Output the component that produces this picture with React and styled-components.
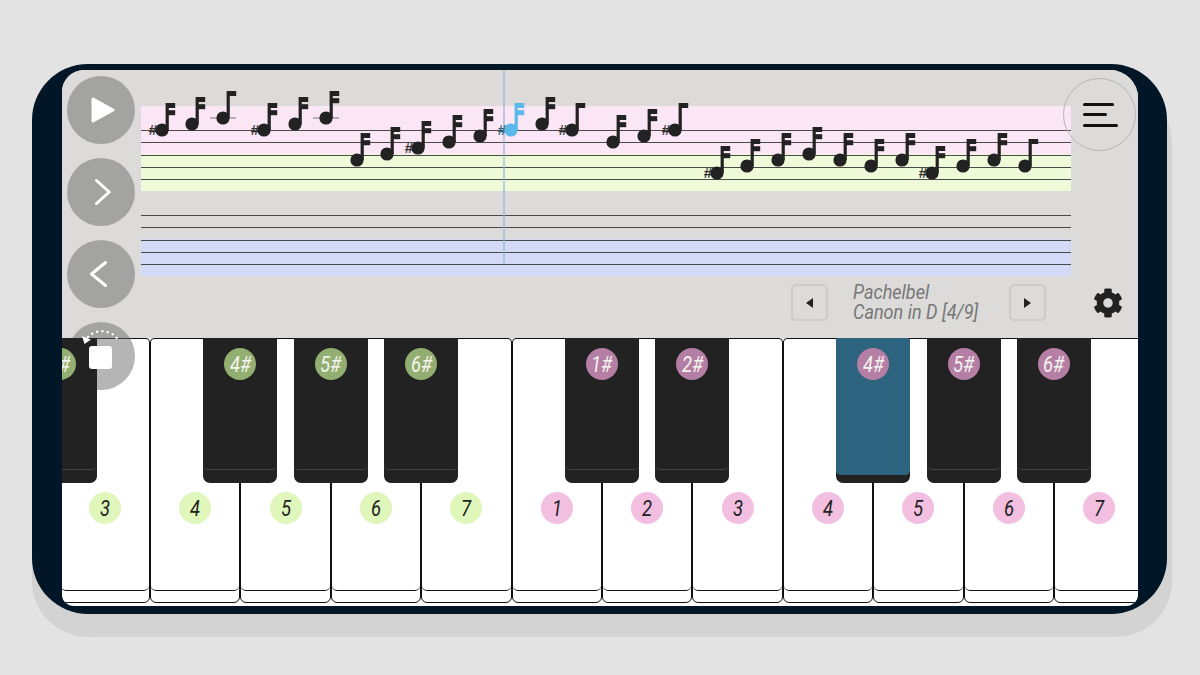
import styled, { createGlobalStyle } from "styled-components";
import { FaCog } from "react-icons/fa";

const GlobalStyle = createGlobalStyle`
  html, body {
    margin: 0;
    height: 100%;
    background: #e3e3e3;
    overflow: hidden;
  }
`;

// cx, cy of the note head, flags, sharp
const notes = [
  [162, 130, 2, 1], [192, 124, 2, 0], [223, 118, 1, 0], [264, 130, 2, 1], [295, 124, 2, 0],
  [326, 118, 2, 0], [357, 160, 2, 0], [387, 154, 2, 0], [418, 148, 2, 1], [449, 142, 2, 0],
  [480, 136, 2, 0], [511, 130, 2, 1], [542, 124, 2, 0], [572, 130, 1, 1], [613, 142, 2, 0],
  [644, 136, 2, 0], [675, 130, 1, 1], [717, 173, 2, 1], [747, 166, 2, 0], [778, 160, 2, 0],
  [809, 154, 2, 0], [840, 160, 2, 0], [871, 166, 2, 0], [902, 160, 2, 0], [932, 173, 2, 1],
  [963, 166, 2, 0], [994, 160, 2, 0], [1025, 166, 1, 0],
];

// first key is off screen, only its black key shows at the left edge
const keys = [
  { tone: "green", black: "2#" },
  { n: "3", tone: "green" },
  { n: "4", tone: "green", black: "4#" },
  { n: "5", tone: "green", black: "5#" },
  { n: "6", tone: "green", black: "6#" },
  { n: "7", tone: "green" },
  { n: "1", tone: "pink", black: "1#" },
  { n: "2", tone: "pink", black: "2#" },
  { n: "3", tone: "pink" },
  { n: "4", tone: "pink", black: "4#", active: true },
  { n: "5", tone: "pink", black: "5#" },
  { n: "6", tone: "pink", black: "6#" },
  { n: "7", tone: "pink" },
];

const Note = ({ cx, cy, flags, sharp, active }) => {
  const color = active ? "#5bb8e8" : "#222";
  const top = cy - 27;
  return (
    <g fill={color}>
      {cy === 118 && <line x1={cx - 13} x2={cx + 13} y1={cy} y2={cy} stroke="#777" strokeWidth="1" />}
      {sharp ? (
        <SharpText x={cx - 9} y={cy + 5} fill={active ? "#2d6885" : "#333"}>
          #
        </SharpText>
      ) : null}
      <circle cx={cx} cy={cy} r="6.6" />
      <rect x={cx + 3.6} y={top} width="3.2" height="27" />
      <rect x={cx + 5} y={top} width="8.2" height="5" />
      {flags === 2 && <rect x={cx + 5} y={top + 7.2} width="8.2" height="5" />}
    </g>
  );
};

const Staff = () => (
  <StaffLines>
    <StaffLine />
    <StaffLine />
    <StaffLine />
    <StaffLine />
    <StaffLine />
  </StaffLines>
);

const App = () => {
  return (
    <Page>
      <GlobalStyle />
      <Phone>
        <Screen>
          <TopPanel>
            <Score>
              <StaffBlock>
                <Band $color="#fae6f5" $height={48} />
                <Band $color="#effad9" $height={37} />
                <Staff />
              </StaffBlock>
              <StaffBlock>
                <Band $color="transparent" $height={48} />
                <Band $color="#d3daf7" $height={37} />
                <Staff />
              </StaffBlock>
              <NotesLayer viewBox="141 106 930 170" width="930" height="170">
                <line x1="504" x2="504" y1="70" y2="263" stroke="#8fb6cf" strokeWidth="1.2" />
                {notes.map(([cx, cy, flags, sharp], i) => (
                  <Note key={i} cx={cx} cy={cy} flags={flags} sharp={sharp} active={cx === 511} />
                ))}
              </NotesLayer>
            </Score>
            <SongRow>
              <SongButton>
                <svg width="9" height="12" viewBox="0 0 9 12">
                  <path d="M8 1v10L1 6z" fill="#222" />
                </svg>
              </SongButton>
              <SongTitle>
                <SongText>
                  Pachelbel
                  <br />
                  Canon in D [4/9]
                </SongText>
              </SongTitle>
              <SongButton>
                <svg width="9" height="12" viewBox="0 0 9 12">
                  <path d="M1 1v10l7-5z" fill="#222" />
                </svg>
              </SongButton>
              <Gear>
                <FaCog size={30} />
              </Gear>
            </SongRow>
          </TopPanel>

          <Keyboard>
            {keys.map((k, i) => (
              <WhiteKey key={i}>
                <WhiteFace>
                  {k.n && (
                    <Badge $tone={k.tone}>
                      <BadgeLabel>{k.n}</BadgeLabel>
                    </Badge>
                  )}
                </WhiteFace>
                {k.black && (
                  <BlackKey>
                    <BlackFace $active={k.active}>
                      <Badge $tone={k.tone} $dark>
                        <BadgeLabel>{k.black}</BadgeLabel>
                      </Badge>
                    </BlackFace>
                  </BlackKey>
                )}
              </WhiteKey>
            ))}
          </Keyboard>

          <SideButtons>
            <RoundButton>
              <svg width="28" height="30" viewBox="0 0 28 30">
                <path d="M6 4 26 15 6 26z" fill="#fff" stroke="#fff" strokeWidth="3" strokeLinejoin="round" />
              </svg>
            </RoundButton>
            <RoundButton>
              <svg width="20" height="30" viewBox="0 0 20 30">
                <path d="M5.5 3.5L18.2 15 5.5 26.5" fill="none" stroke="#fff" strokeWidth="3" strokeLinecap="round" strokeLinejoin="round" />
              </svg>
            </RoundButton>
            <RoundButton $shift={3}>
              <svg width="20" height="30" viewBox="0 0 20 30">
                <path d="M17.5 3.5L3.5 15l14 11.5" fill="none" stroke="#fff" strokeWidth="3" strokeLinecap="round" strokeLinejoin="round" />
              </svg>
            </RoundButton>
            <RoundButton>
              <svg width="68" height="68" viewBox="0 0 68 68">
                <path
                  d="M21 15C26 10 33 8 40 10C45 11 49 14 51 18"
                  fill="none"
                  stroke="#fff"
                  strokeWidth="2.4"
                  strokeLinecap="round"
                  strokeDasharray="0.1 5.2"
                />
                <path d="M15 14l9 3.5-6.5 4.5z" fill="#fff" />
                <rect x="22" y="24" width="23" height="23" rx="3" fill="#fff" />
              </svg>
            </RoundButton>
          </SideButtons>

          <MenuButton>
            <MenuBar $width={31} />
            <MenuBar $width={24} />
            <MenuBar $width={35} />
          </MenuButton>
        </Screen>
      </Phone>
    </Page>
  );
};

const Page = styled.div`
  padding: 64px 0 0 32px;
`;

const Phone = styled.div`
  width: 1135px;
  height: 550px;
  box-sizing: border-box;
  padding: 6px 29px 8px 30px;
  background: #011627;
  border-radius: 56px;
  box-shadow: 5px 23px 0 #d3d3d3, 0 23px 0 #d3d3d3;
`;

const Screen = styled.div`
  position: relative;
  width: 1076px;
  height: 536px;
  display: flex;
  flex-direction: column;
  overflow: hidden;
  border-radius: 22px 28px 12px 12px;
  background: #fff;
`;

const TopPanel = styled.div`
  height: 268px;
  flex: none;
  box-sizing: border-box;
  padding: 36px 15px 0 79px;
  background: #dcdbd9;
`;

const Score = styled.div`
  position: relative;
  width: 930px;
`;

const StaffBlock = styled.div`
  position: relative;
  display: flex;
  flex-direction: column;
`;

const Band = styled.div`
  height: ${(p) => p.$height}px;
  background: ${(p) => p.$color};
`;

const StaffLines = styled.div`
  position: absolute;
  top: 24px;
  left: 0;
  right: 0;
  display: flex;
  flex-direction: column;
  gap: 11.25px;
`;

const StaffLine = styled.div`
  height: 1px;
  background: #4a4a4a;
`;

const NotesLayer = styled.svg`
  position: absolute;
  top: 0;
  left: 0;
  overflow: visible;
`;

const SharpText = styled.text`
  font-family: "Liberation Sans", sans-serif;
  font-weight: 700;
  font-size: 15px;
  text-anchor: middle;
`;

const SongRow = styled.div`
  display: flex;
  align-items: center;
  justify-content: flex-end;
  margin-top: 7px;
`;

const SongButton = styled.div`
  width: 37px;
  height: 37px;
  box-sizing: border-box;
  display: flex;
  align-items: center;
  justify-content: center;
  border: 2px solid #cbcbc9;
  border-radius: 5px;
`;

const SongTitle = styled.div`
  width: 156px;
  padding-left: 25px;
`;

const SongText = styled.div`
  font-family: Roboto, sans-serif;
  font-style: italic;
  font-size: 21px;
  line-height: 19.5px;
  color: #777;
  white-space: nowrap;
  transform: scaleX(0.86);
  transform-origin: left;
`;

const Gear = styled.div`
  display: flex;
  margin-left: 47px;
  color: #222;
`;

const Keyboard = styled.div`
  position: relative;
  flex: 1;
  display: flex;
  margin-left: -92.8px;
`;

const WhiteKey = styled.div`
  position: relative;
  flex: none;
  width: 90.4px;
  height: 265px;
  box-sizing: border-box;
  background: #fff;
  border: 1px solid #111;
  border-radius: 4px 4px 6px 6px;
`;

const WhiteFace = styled.div`
  height: 252px;
  box-sizing: border-box;
  display: flex;
  justify-content: center;
  padding-top: 153px;
  border-bottom: 1.5px solid #111;
  border-radius: 0 0 5px 5px;
`;

const BlackKey = styled.div`
  position: absolute;
  z-index: 3;
  top: -1px;
  right: -38px;
  width: 74px;
  height: 145px;
  background: #222;
  border-radius: 2px 2px 7px 7px;
`;

const BlackFace = styled.div`
  height: ${(p) => (p.$active ? 137 : 132)}px;
  box-sizing: border-box;
  display: flex;
  justify-content: center;
  padding-top: 10px;
  background: ${(p) => (p.$active ? "#2f6480" : "#222")};
  border-bottom: 1px solid ${(p) => (p.$active ? "#2f6480" : "#444")};
  border-radius: 2px 2px 5px 5px;
`;

const badgeColor = (p) => {
  if (p.$tone === "green") return p.$dark ? "#92ae70" : "#dff7bb";
  return p.$dark ? "#b57ea4" : "#f3bfe0";
};

const Badge = styled.div`
  width: 32px;
  height: 32px;
  display: flex;
  align-items: center;
  justify-content: center;
  border-radius: 50%;
  background: ${badgeColor};
  color: ${(p) => (p.$dark ? "#f4f4ee" : "#222")};
`;

const BadgeLabel = styled.span`
  display: inline-block;
  font-family: Roboto, sans-serif;
  font-style: italic;
  font-size: 22px;
  transform: scaleX(0.84);
`;

const SideButtons = styled.div`
  position: absolute;
  top: 6px;
  left: 5px;
  display: flex;
  flex-direction: column;
  gap: 14px;
`;

// the disc sits between white and black keys, the icon on top of both
const RoundButton = styled.div`
  position: relative;
  width: 68px;
  height: 68px;
  box-sizing: border-box;
  display: flex;
  align-items: center;
  justify-content: center;
  padding-right: ${(p) => (p.$shift || 0) * 2}px;
  &::before {
    content: "";
    position: absolute;
    inset: 0;
    z-index: 2;
    border-radius: 50%;
    background: rgba(104, 104, 104, 0.49);
  }
  svg {
    position: relative;
    z-index: 4;
    flex: none;
  }
`;

const MenuButton = styled.div`
  position: absolute;
  top: 8px;
  right: 2px;
  width: 73px;
  height: 73px;
  box-sizing: border-box;
  display: flex;
  flex-direction: column;
  align-items: flex-start;
  justify-content: center;
  gap: 7.5px;
  padding-left: 19px;
  border: 1.5px solid #b5b5b3;
  border-radius: 50%;
`;

const MenuBar = styled.div`
  width: ${(p) => p.$width}px;
  height: 3px;
  border-radius: 2px;
  background: #111;
`;

export default App;
